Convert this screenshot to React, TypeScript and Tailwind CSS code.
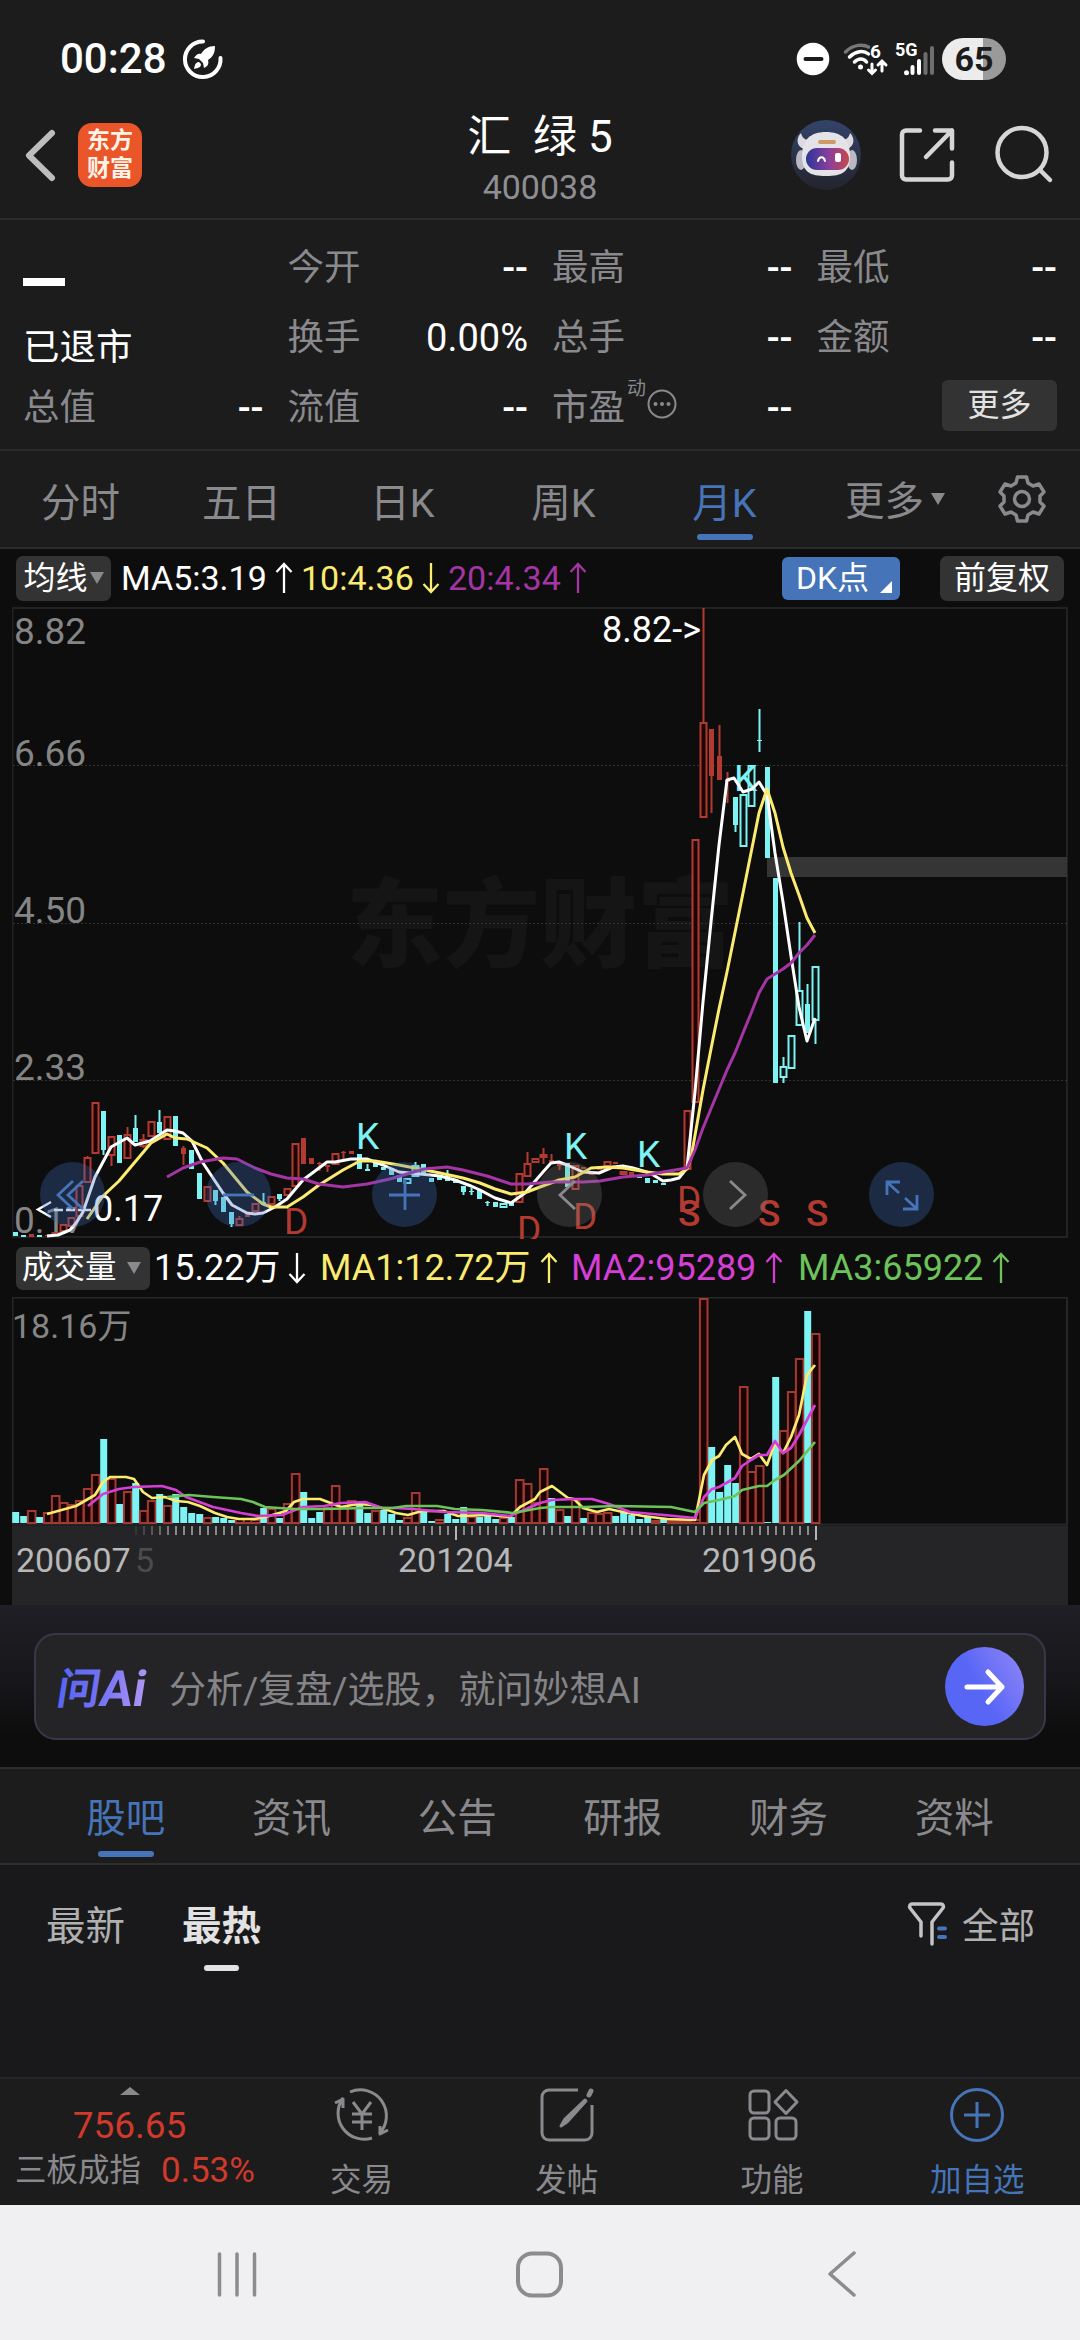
import type { ReactNode } from "react";
import clsx from "clsx";

type Candle = [kind: string, top: number, bottom: number, high?: number, low?: number];

const UP = "#b33a30";
const DOWN = "#7df3f3";

// Kinds: r / c = filled, R / C = hollow
const candles: Candle[] = [
  ["c", 1232, 1236], ["c", 1235, 1237], ["r", 1234, 1237], ["c", 1235, 1237], ["r", 1235, 1236],
  ["R", 1232, 1236], ["R", 1224, 1232], ["R", 1217, 1227], ["R", 1185, 1217], ["R", 1157, 1183, 1156],
  ["R", 1102, 1154], ["c", 1111, 1150, 1111, 1155], ["R", 1136, 1156, 1136, 1166], ["c", 1135, 1163], ["R", 1134, 1159, 1127],
  ["c", 1128, 1142, 1115], ["R", 1139, 1147, 1134, 1148], ["R", 1121, 1137], ["c", 1122, 1133, 1110], ["R", 1116, 1140],
  ["c", 1116, 1146], ["r", 1148, 1154, 1146, 1165], ["c", 1150, 1169], ["c", 1173, 1199], ["R", 1186, 1202],
  ["c", 1190, 1201, 1190, 1205], ["c", 1197, 1212], ["c", 1212, 1224, 1212, 1227], ["R", 1218, 1226, 1216], ["r", 1212, 1217],
  ["R", 1203, 1212], ["c", 1202, 1205, 1193], ["R", 1196, 1205], ["c", 1194, 1199, 1194, 1201], ["R", 1188, 1196],
  ["R", 1143, 1187], ["r", 1138, 1164], ["r", 1158, 1164], ["r", 1163, 1164, 1162, 1171], ["r", 1165, 1167, 1165, 1172],
  ["R", 1153, 1165], ["r", 1152, 1153, 1151, 1159], ["r", 1151, 1154], ["c", 1154, 1169], ["c", 1169, 1171, 1164],
  ["c", 1163, 1167], ["c", 1167, 1170], ["c", 1168, 1175], ["c", 1175, 1182], ["C", 1178, 1184],
  ["C", 1165, 1177, 1162], ["c", 1164, 1175], ["c", 1178, 1182], ["c", 1177, 1180], ["c", 1174, 1181, 1170],
  ["c", 1179, 1183], ["c", 1186, 1192, 1186, 1195], ["c", 1191, 1192, 1188, 1195], ["c", 1190, 1199], ["c", 1202, 1203, 1201, 1206],
  ["c", 1202, 1207], ["C", 1203, 1208], ["c", 1203, 1206], ["R", 1173, 1203], ["R", 1163, 1177, 1152],
  ["R", 1158, 1163], ["R", 1154, 1158, 1148, 1164], ["r", 1160, 1162, 1154], ["r", 1163, 1166, 1163, 1170], ["c", 1163, 1187],
  ["R", 1165, 1190], ["r", 1167, 1169], ["r", 1173, 1175], ["r", 1168, 1170], ["R", 1161, 1167],
  ["r", 1162, 1164], ["R", 1171, 1175], ["r", 1172, 1175], ["c", 1175, 1178], ["c", 1178, 1183],
  ["c", 1180, 1183], ["c", 1183, 1185], ["r", 1170, 1172], ["r", 1168, 1170], ["R", 1110, 1170],
  ["R", 839, 1103], ["R", 722, 818, 608], ["r", 729, 776, 729, 813], ["r", 756, 780, 725], ["r", 780, 782, 772, 803],
  ["c", 797, 825, 797, 832], ["C", 794, 847], ["C", 765, 807], ["c", 740, 741, 709, 752], ["c", 767, 858],
  ["c", 878, 1083], ["C", 1066, 1078, 1057, 1083], ["C", 1035, 1069], ["C", 990, 1026, 922], ["c", 1004, 1033, 984],
  ["C", 966, 1021, 966, 1044],
];

const volumes =
  "c1512 c1516 r1510 c1517 r1512 r1495 r1502 r1504 r1500 r1488 r1474 c1439 r1478 c1504 r1491 c1483 r1510 r1500 c1494 r1505 " +
  "c1494 c1507 c1513 c1514 r1517 c1517 c1518 c1520 r1518 r1518 r1519 c1508 r1508 c1518 r1503 r1473 c1492 c1518 c1512 r1507 " +
  "r1485 r1507 r1500 c1505 c1513 r1510 c1510 c1514 c1520 r1517 r1492 c1510 c1521 r1519 c1514 c1519 c1507 r1516 c1517 c1514 " +
  "c1519 r1517 c1517 r1479 r1483 r1502 r1468 c1498 r1509 c1516 r1499 c1518 r1512 r1513 r1512 c1516 c1512 c1515 c1519 c1517 " +
  "r1520 c1519 r1520 r1520 r1520 r1519 r1298 c1447 c1492 c1465 c1483 r1386 r1471 r1465 c1522 c1377 r1430 r1391 r1358 c1311 r1333";

const priceLines = [
  {
    color: "#ffffff",
    points:
      "47,1236 58,1235 70,1230 76,1223 83,1212 95,1177 111,1147 127,1138 135,1145 150,1141 167,1130 175,1131 183,1133 192,1141 203,1163 223,1193 232,1205 247,1213 255,1214 263,1213 275,1207 287,1199 303,1180 327,1162 335,1162 351,1159 367,1159 383,1165 399,1172 420,1174 440,1176 455,1180 471,1186 480,1190 495,1198 511,1203 525,1193 543,1172 551,1163 559,1162 567,1165 583,1172 599,1173 613,1167 623,1166 633,1168 650,1173 663,1181 671,1180 679,1178 687,1168 695,1092 703,1002 711,922 719,845 727,780 734,778 743,792 752,789 759,782 767,795 775,853 783,902 791,956 799,1007 807,1041 815,1018",
  },
  {
    color: "#fbeb70",
    points:
      "87,1219 103,1196 119,1181 135,1162 151,1143 167,1134 175,1138 187,1139 207,1148 223,1163 247,1192 263,1204 271,1207 287,1207 303,1197 319,1185 343,1170 360,1161 375,1161 399,1165 420,1169 440,1173 463,1178 480,1183 495,1189 511,1194 527,1192 540,1187 559,1180 575,1177 591,1168 607,1167 623,1168 647,1172 663,1174 679,1174 687,1169 691,1158 703,1090 711,1049 719,1009 727,972 743,893 759,813 767,789 775,813 783,847 791,873 799,895 807,918 815,933",
  },
  {
    color: "#a535a5",
    points:
      "167,1177 183,1168 200,1162 223,1158 237,1159 255,1168 271,1174 287,1178 303,1179 319,1184 343,1187 367,1184 390,1179 424,1169 447,1167 463,1170 487,1176 511,1184 527,1184 551,1182 583,1182 600,1181 623,1177 647,1175 663,1172 687,1168 695,1150 703,1128 727,1070 735,1053 743,1033 752,1011 759,993 767,979 775,974 783,969 791,963 799,953 807,945 815,935",
  },
];

const volumeLines = [
  {
    color: "#fbeb70",
    points:
      "47,1514 76,1506 95,1495 103,1482 110,1477 126,1477 134,1479 143,1492 152,1498 165,1497 176,1501 188,1502 200,1506 215,1513 227,1517 239,1519 255,1519 269,1516 286,1511 294,1502 303,1499 320,1499 341,1507 358,1504 372,1505 382,1508 396,1513 408,1515 422,1511 444,1511 458,1516 489,1515 510,1517 520,1507 535,1499 540,1492 552,1486 568,1498 574,1499 583,1508 597,1512 609,1509 623,1512 643,1516 667,1519 695,1520 704,1475 712,1460 719,1456 726,1445 735,1437 742,1454 751,1459 759,1454 767,1465 775,1443 783,1453 791,1437 799,1415 807,1375 815,1365",
  },
  {
    color: "#d63fd6",
    points:
      "88,1506 103,1494 119,1489 134,1487 162,1486 176,1490 186,1497 213,1507 241,1513 258,1516 282,1515 303,1507 324,1506 341,1503 365,1502 382,1508 396,1508 413,1509 444,1512 482,1513 510,1516 540,1503 552,1500 574,1499 592,1499 609,1504 630,1512 664,1515 695,1518 704,1497 712,1489 719,1487 728,1482 735,1478 742,1466 751,1460 759,1455 767,1455 775,1441 783,1453 791,1448 799,1435 815,1405",
  },
  {
    color: "#6cc35a",
    points:
      "167,1497 189,1495 213,1497 241,1499 253,1502 265,1507 293,1509 324,1509 365,1508 393,1508 406,1506 437,1506 455,1509 482,1510 513,1513 540,1508 552,1507 585,1507 616,1506 671,1507 695,1512 704,1503 719,1500 735,1496 742,1490 759,1486 767,1486 775,1480 784,1475 799,1461 815,1442",
  },
];

const markers = [
  { t: "K", x: 356, y: 1149 },
  { t: "K", x: 564, y: 1159 },
  { t: "K", x: 637, y: 1167 },
  { t: "K", x: 734, y: 791 },
  { t: "D", x: 284, y: 1234 },
  { t: "D", x: 517, y: 1242 },
  { t: "D", x: 573, y: 1229 },
  { t: "D", x: 677, y: 1212 },
  { t: "S", x: 678, y: 1226 },
  { t: "S", x: 758, y: 1226 },
  { t: "S", x: 806, y: 1226 },
];

function StatusBar() {
  return (
    <div className="flex h-[112px] items-start justify-between pl-[60px] pr-[74px] text-white">
      <div className="flex items-center gap-[15px] pt-[35px]">
        <span className="text-[42px] font-medium leading-[48px]">00:28</span>
        <svg width="42" height="42" viewBox="0 0 42 42" fill="none">
          <path d="M21 3.500A17.800 17.800 0 1 0 38.500 20" stroke="#fff" strokeWidth="4" strokeLinecap="round" />
          <path d="M33 8c-7 0-11 3-14 8-3-1-5 1-7 4l5 1 4 4 1 5c4-2 5-4 4-8 5-3 7-7 7-14zM17 24c-3 0-4 2-5 7 5-1 7-2 7-5z" fill="#fff" />
        </svg>
      </div>
      <div className="flex items-center pt-[38px]">
        <svg width="146" height="42" viewBox="796 38 146 42" fill="none">
          <circle cx="813" cy="59" r="16.300" fill="#fff" />
          <path d="M805.500 59h16" stroke="#1c1c1c" strokeWidth="4" strokeLinecap="round" />
          <g strokeWidth="3.500" strokeLinecap="round">
            <path d="M845.500 52c8-8 18-8 23-5" stroke="#777" />
            <path d="M849.500 57c6-6 14-7 19-3M854.500 62c4-4 9-4 12 0" stroke="#fff" />
            <path d="M872 64v9M868.500 70l3.500 3.500 3.500-3.500M882 71v-9M878 65l4-4 4 4" stroke="#fff" strokeWidth="3" />
          </g>
          <circle cx="860.500" cy="67" r="2.500" fill="#fff" />
          <text x="870" y="58" fontSize="19" fontWeight="700" fill="#fff">6</text>
          <text x="895" y="55.500" fontSize="18" fontWeight="700" fill="#fff">5G</text>
          <circle cx="906.500" cy="72.800" r="2.500" fill="#fff" />
          <g strokeWidth="4" strokeLinecap="round">
            <path d="M912.500 67v6M919 61v12" stroke="#fff" />
            <path d="M925.500 54v19M932 48v25" stroke="#6e6e6e" />
          </g>
        </svg>
        <div className="flex h-[42px] w-[64px] items-center justify-center rounded-full bg-[linear-gradient(90deg,#ececec_64%,#9a9a9a_64%)] text-[34px] font-bold leading-none text-[#1c1c1c]">
          65
        </div>
      </div>
    </div>
  );
}

function TitleBar() {
  return (
    <div className="flex h-[106px] justify-between px-[22px]">
      <div className="flex w-[300px] gap-[20px] pt-[11px]">
        <svg width="36" height="64" viewBox="0 0 36 64" fill="none" stroke="#bdbdbd" strokeWidth="6" strokeLinecap="round" strokeLinejoin="round">
          <path d="M30 10L7 32.500 30 55" />
        </svg>
        <div className="flex h-[64px] w-[64px] flex-col items-center justify-center rounded-[14px] bg-[#ea5529] text-[23px] font-bold leading-[28px] text-[#fff3e8]">
          <span>东方</span>
          <span>财富</span>
        </div>
      </div>
      <div className="flex flex-col items-center">
        <div className="whitespace-pre text-[44px] leading-[50px] text-white">汇  绿 5</div>
        <div className="mt-[5px] text-[34px] leading-[40px] text-[#8e8e93]">400038</div>
      </div>
      <div className="flex w-[300px] justify-end pt-[7px]">
        <svg width="270" height="72" viewBox="788 119 270 72" fill="none">
          <defs>
            <linearGradient id="avatar" x1="0" y1="0" x2="0" y2="1">
              <stop offset="0" stopColor="#33436a" />
              <stop offset="1" stopColor="#23242c" />
            </linearGradient>
            <linearGradient id="visor" x1="0" y1="0" x2="1" y2="0">
              <stop offset="0" stopColor="#2c3597" />
              <stop offset="0.550" stopColor="#8b3f9a" />
              <stop offset="1" stopColor="#c8484c" />
            </linearGradient>
          </defs>
          <circle cx="826" cy="155" r="35" fill="url(#avatar)" />
          <path d="M801 133c-5 5-5 13 3 16l7-9c-5 1-9-2-10-7zM850 133c5 5 5 13-3 16l-7-9c5 1 9-2 10-7z" fill="#dadae0" />
          <ellipse cx="801" cy="160" rx="5" ry="10" fill="#b9b9c4" />
          <ellipse cx="852" cy="160" rx="5" ry="10" fill="#b9b9c4" />
          <path d="M802 156c0-16 8-24 24-24s24 8 24 24-8 20-24 20-24-4-24-20z" fill="#e4e3e8" />
          <rect x="818" y="140" width="18" height="4" rx="2" fill="#cf9a66" />
          <rect x="806" y="148" width="43" height="22" rx="11" fill="url(#visor)" />
          <path d="M818 161c1-5 6-5 7 0" stroke="#fff" strokeWidth="2" strokeLinecap="round" />
          <rect x="835" y="153" width="6" height="9" rx="2" fill="#fff" />
          <g stroke="#d6d6d6" strokeWidth="4.500" strokeLinecap="round" strokeLinejoin="round">
            <path d="M920 130.500h-14a4 4 0 0 0-4 4v41a4 4 0 0 0 4 4h42a4 4 0 0 0 4-4v-13M935 130.500h17v18M952 130.500L926 157" />
            <circle cx="1022" cy="152.500" r="24.500" />
            <path d="M1040 170l10 10" />
          </g>
        </svg>
      </div>
    </div>
  );
}

function Quote({ label, value, extra }: { label: string; value: string; extra?: ReactNode }) {
  return (
    <div className="flex h-[70px] items-center justify-between pt-[6px]">
      <span className="flex text-[#8a8a8e]">
        {label}
        {extra}
      </span>
      <span className={clsx("text-[38px] text-white", value === "--" && "font-medium")}>{value}</span>
    </div>
  );
}

function QuotePanel() {
  return (
    <div className="h-[233px] border-y-2 border-[#2c2c2c] px-[23px] pt-[10px] text-[36.5px] leading-[44px]">
      <div className="grid grid-cols-4 grid-rows-3 gap-x-[24px]">
        <div className="row-span-2 flex flex-col text-white">
          <svg className="mt-[48px]" width="42" height="8">
            <rect width="42" height="8" fill="#fff" />
          </svg>
          <span className="mt-[40px]">已退市</span>
        </div>
        <Quote label="今开" value="--" />
        <Quote label="最高" value="--" />
        <Quote label="最低" value="--" />
        <Quote label="换手" value="0.00%" />
        <Quote label="总手" value="--" />
        <Quote label="金额" value="--" />
        <Quote label="总值" value="--" />
        <Quote label="流值" value="--" />
        <Quote
          label="市盈"
          value="--"
          extra={
            <>
              <span className="ml-[2px] -mt-[11px] text-[19px] leading-[28px]">动</span>
              <svg className="ml-[1px] mt-[3px]" width="30" height="30" viewBox="0 0 30 30" fill="#8a8a8e">
                <circle cx="15" cy="15" r="13.500" fill="none" stroke="#8a8a8e" strokeWidth="2" />
                <circle cx="8.500" cy="15" r="2" />
                <circle cx="15" cy="15" r="2" />
                <circle cx="21.500" cy="15" r="2" />
              </svg>
            </>
          }
        />
        <div className="flex h-[70px] items-center justify-end">
          <div className="flex h-[51px] w-[115px] items-center justify-center rounded-[6px] bg-[#333333] text-[32px] text-[#e2e2e2]">更多</div>
        </div>
      </div>
    </div>
  );
}

function PeriodTabs() {
  const tabs = ["分时", "五日", "日K", "周K", "月K"];
  return (
    <div className="flex h-[96px] items-center text-[39.5px] text-[#8a8a8e]">
      {tabs.map((tab) => (
        <div key={tab} className={clsx("flex h-full w-[161px] flex-col items-center pt-[28px]", tab === "月K" && "text-[#4674b9]")}>
          <span className="leading-[50px]">{tab}</span>
          {tab === "月K" && <span className="mt-[5px] h-[6px] w-[56px] rounded-[3px] bg-[#4674b9]" />}
        </div>
      ))}
      <div className="ml-[40px] flex items-center">
        <span className="pt-[5px]">更多</span>
        <svg className="ml-[7px]" width="14" height="12">
          <path d="M0 0h14l-7 12z" fill="#8a8a8e" />
        </svg>
      </div>
      <svg className="ml-[52px]" width="50" height="50" viewBox="0 0 50 50" fill="none" stroke="#8a8a8e" strokeWidth="3.500" strokeLinejoin="round">
        <path d="M20.500 3h9l1.500 6 5 3 6-2 5 8-4 4v6l4 4-5 8-6-2-5 3-1.500 6h-9l-1.500-6-5-3-6 2-5-8 4-4v-6l-4-4 5-8 6 2 5-3z" />
        <circle cx="25" cy="25" r="7.500" />
      </svg>
    </div>
  );
}

function Arrow({ color, down }: { color: string; down?: boolean }) {
  return (
    <svg width="18" height="32" viewBox="0 0 18 32" fill="none" stroke={color} strokeWidth="2.300">
      <path d={down ? "M9 1v29M1.500 22L9 30l7.500-8" : "M9 31V2M1.500 10L9 2l7.500 8"} />
    </svg>
  );
}

function AverageBar() {
  return (
    <div className="flex h-[58px] items-center pl-[16px] pr-[16px] text-[34px] text-white">
      <div className="flex h-[45px] w-[95px] items-center justify-center gap-[2px] rounded-[7px] bg-[#333333] text-[32px]">
        <span>均线</span>
        <svg width="14" height="12">
          <path d="M0 0h14l-7 12z" fill="#8a8a8e" />
        </svg>
      </div>
      <div className="ml-[10px] flex w-[180px] items-center gap-[8px]">
        MA5:3.19
        <Arrow color="#fff" />
      </div>
      <div className="flex w-[147px] items-center gap-[8px] text-[#fbeb70]">
        10:4.36
        <Arrow color="#fbeb70" down />
      </div>
      <div className="flex items-center gap-[8px] text-[#a535a5]">
        20:4.34
        <Arrow color="#a535a5" />
      </div>
      <div className="ml-auto flex h-[43px] w-[118px] items-center rounded-[6px] bg-[#4674b9] pl-[14px] text-[32px]">
        DK点
        <svg className="ml-[11px] mt-[18px]" width="12" height="12">
          <path d="M12 0v12H0z" fill="#fff" />
        </svg>
      </div>
      <div className="ml-[40px] flex h-[45px] w-[124px] items-center justify-center rounded-[7px] bg-[#333333] text-[32px]">前复权</div>
    </div>
  );
}

function CandleShape({ candle, x }: { candle: Candle; x: number }) {
  const [kind, top, bottom, high = top, low = bottom] = candle;
  const color = kind.toLowerCase() === "r" ? UP : DOWN;
  const hollow = kind === "R" || kind === "C";
  return (
    <g>
      {high < top && <rect x={x - 1} y={high} width="2" height={top - high} fill={color} />}
      {low > bottom && <rect x={x - 1} y={bottom} width="2" height={low - bottom} fill={color} />}
      {hollow ? (
        <rect x={x - 3} y={top + 1} width="6" height={Math.max(bottom - top - 2, 1)} fill={kind === "R" ? "#1c0505" : "#061414"} stroke={color} strokeWidth="2" />
      ) : (
        <rect x={x - 2.5} y={top} width="5" height={Math.max(bottom - top, 1)} fill={color} />
      )}
    </g>
  );
}

function PriceChart() {
  return (
    <svg className="block" width="1057" height="632" viewBox="12 607 1057 632" fill="none">
      <rect x="12.500" y="608" width="1054.500" height="629" stroke="#222224" strokeWidth="2" />
      <text x="346" y="959" fontSize="97" fontWeight="900" fill="#151515">东方财富</text>
      {[765, 923, 1080].map((y) => (
        <path key={y} d={`M13 ${y + 0.5}H1067`} stroke="#333" strokeDasharray="2 2" />
      ))}
      <rect x="767" y="857" width="300" height="20" fill="#353535" />
      <g fontSize="37" fill="#858585">
        <text x="14" y="644">8.82</text>
        <text x="14" y="766">6.66</text>
        <text x="14" y="923">4.50</text>
        <text x="14" y="1080">2.33</text>
        <text x="14" y="1233">0.17</text>
      </g>
      {candles.map((candle, i) => (
        <CandleShape key={i} candle={candle} x={15.5 + i * 8} />
      ))}
      {markers.map((m) => (
        <text key={`${m.t}${m.x}`} x={m.x} y={m.y} fontSize="37" fontWeight={m.t === "S" ? 500 : 400} fill={m.t === "K" ? DOWN : UP}>
          {m.t}
        </text>
      ))}
      {priceLines.map((line) => (
        <polyline key={line.color} points={line.points} stroke={line.color} strokeWidth="3" strokeLinejoin="round" />
      ))}
      <text x="602" y="642" fontSize="36" fill="#fff">8.82-&gt;</text>
      <path d="M51 1202l-13 7.500 13 7.500M54 1210h9M66 1210h9M78 1210h13" stroke="#fff" strokeWidth="2.500" />
      <text x="93" y="1221" fontSize="36" fill="#fff">0.17</text>
    </svg>
  );
}

const controls = [
  { id: "rewind", blue: true, d: "M33 19L18 33l15 14M43 19L28 33l15 14" },
  { id: "minus", blue: true, d: "M17 33h31" },
  { id: "plus", blue: true, d: "M17 33h31M33 17v31" },
  { id: "prev", blue: false, d: "M38 19L23 33l15 14" },
  { id: "next", blue: false, d: "M27 19l15 14-15 14" },
  { id: "expand", blue: true, d: "M30 31L19 21M18 33V20h13M36 36l11 10M48 33v14H34" },
];

function ChartControls() {
  return (
    <div className="absolute left-[40px] top-[555px] flex gap-[100.800px]">
      {controls.map((c) => (
        <div key={c.id} className={clsx("h-[65px] w-[65px] rounded-full", c.blue ? "bg-[#3f6fc0]/30" : "bg-[#888888]/25")}>
          <svg width="65" height="65" viewBox="0 0 65 65" fill="none" stroke={c.blue ? "#4674b9" : "#8a8a8e"} strokeWidth="2.800">
            <path d={c.d} />
          </svg>
        </div>
      ))}
    </div>
  );
}

function VolumeBar() {
  return (
    <div className="flex h-[58px] items-center pl-[16px] text-[36px] text-white">
      <div className="flex h-[43px] w-[134px] items-center justify-between rounded-[7px] bg-[#333333] pl-[6px] pr-[9px] text-[31.5px]">
        <span>成交量</span>
        <svg width="14" height="12">
          <path d="M0 0h14l-7 12z" fill="#8a8a8e" />
        </svg>
      </div>
      <div className="ml-[4px] flex w-[166px] items-center gap-[8px]">
        15.22万
        <Arrow color="#fff" down />
      </div>
      <div className="flex w-[251px] items-center gap-[9px] text-[#fbeb70]">
        MA1:12.72万
        <Arrow color="#fbeb70" />
      </div>
      <div className="flex w-[227px] items-center gap-[9px] text-[#d63fd6]">
        MA2:95289
        <Arrow color="#d63fd6" />
      </div>
      <div className="flex items-center gap-[9px] text-[#6cc35a]">
        MA3:65922
        <Arrow color="#6cc35a" />
      </div>
    </div>
  );
}

function VolumeChart() {
  const ticks = Array.from({ length: 86 }, (_, i) => i + 15);
  return (
    <svg className="block" width="1057" height="308" viewBox="12 1297 1057 308" fill="none">
      <rect x="12.500" y="1297.500" width="1054.500" height="227" stroke="#262628" strokeWidth="2" />
      <text x="12" y="1338" fontSize="34" fill="#858585">18.16万</text>
      {volumes.split(" ").map((bar, i) => {
        const x = 15.7 + i * 8;
        const top = Number(bar.slice(1));
        return bar[0] === "c" ? (
          <rect key={i} x={x - 3.5} y={top} width="7" height={1523 - top} fill={DOWN} />
        ) : (
          <rect key={i} x={x - 3.8} y={top + 1} width="7.600" height={Math.max(1522 - top, 1)} fill="#1c0404" stroke="#a33a32" strokeWidth="2" />
        );
      })}
      {volumeLines.map((line) => (
        <polyline key={line.color} points={line.points} stroke={line.color} strokeWidth="2.700" strokeLinejoin="round" />
      ))}
      <rect x="12" y="1525.500" width="1056" height="80" fill="#252527" />
      {ticks.map((i) => {
        const long = i === 55 || i === 100;
        return (
          <rect key={i} x={15 + i * 8} y="1526" width="2" height={long ? 14 : 9} fill={long ? "#b5b5b5" : "#8a8a8a"} opacity={Math.min(1, (i - 14) / 6)} />
        );
      })}
      <g fontSize="34" fill="#b8b8b8">
        <text x="16" y="1572">200607</text>
        <text x="135" y="1572" fill="#4b4b4d">5</text>
        <text x="398" y="1572">201204</text>
        <text x="702" y="1572">201906</text>
      </g>
    </svg>
  );
}

function AskAi() {
  return (
    <div className="h-[162px] bg-[linear-gradient(180deg,#1f1f25_0%,#17171b_45%,#0d0d0d_80%)] px-[34px] pt-[28px]">
      <div className="flex h-[107px] items-center rounded-[22px] border-2 border-[#38384a] bg-[#242426] pl-[18px] pr-[20px]">
        <svg width="94" height="46" viewBox="54 1663 94 46" fill="none">
          <defs>
            <linearGradient id="ask" x1="0" y1="0" x2="90" y2="0" gradientUnits="userSpaceOnUse">
              <stop offset="0" stopColor="#5566f2" />
              <stop offset="0.500" stopColor="#7472f5" />
              <stop offset="1" stopColor="#b098f5" />
            </linearGradient>
          </defs>
          <g transform="translate(55 1704) skewX(-9)" fill="url(#ask)">
            <text x="0" y="-1" fontSize="43" fontWeight="700">问</text>
            <text x="43" y="1" fontSize="50" fontWeight="700" textLength="46" lengthAdjust="spacingAndGlyphs">Ai</text>
          </g>
        </svg>
        <span className="ml-[21px] pt-[8px] text-[37px] leading-[44px] text-[#858588]">分析/复盘/选股，就问妙想AI</span>
        <div className="ml-auto flex h-[79px] w-[79px] items-center justify-center rounded-full bg-[linear-gradient(60deg,#5866f6_45%,#9388f6)]">
          <svg width="42" height="38" viewBox="0 0 42 38" fill="none" stroke="#fff" strokeWidth="5" strokeLinecap="round" strokeLinejoin="round">
            <path d="M3 19h35M24 4l14 15-14 15" />
          </svg>
        </div>
      </div>
    </div>
  );
}

function NewsTabs() {
  const tabs = ["股吧", "资讯", "公告", "研报", "财务", "资料"];
  return (
    <div className="grid h-[98px] grid-cols-6 border-y-2 border-[#2e2e2e] bg-[#1c1c1c] px-[43px] text-[39.5px] leading-[50px] text-[#8a8a8e]">
      {tabs.map((tab, i) => (
        <div key={tab} className={clsx("flex flex-col items-center pt-[25px]", i === 0 && "text-[#4674b9]")}>
          <span>{tab}</span>
          {i === 0 && <span className="mt-[7px] h-[6px] w-[56px] rounded-[3px] bg-[#4674b9]" />}
        </div>
      ))}
    </div>
  );
}

function PostFilter() {
  return (
    <div className="flex h-[212px] items-start bg-[#19191b] pl-[46px] pr-[45px] pt-[37px] text-[39.5px] leading-[50px] text-[#b0b0b0]">
      <span>最新</span>
      <div className="ml-[57px] flex flex-col items-center font-bold text-[#e2e2e2]">
        <span>最热</span>
        <span className="mt-[13px] h-[6px] w-[35px] rounded-[3px] bg-[#e2e2e2]" />
      </div>
      <div className="ml-auto flex items-center gap-[13px] text-[36.5px]">
        <svg className="-mt-[6px]" width="42" height="44" viewBox="0 0 42 44" fill="none" strokeLinecap="round" strokeLinejoin="round">
          <path d="M14 34V20L3 6c-1-2 0-4 2-4h29c2 0 3 2 2 4L25 20v22" stroke="#c4c4c4" strokeWidth="3.500" />
          <path d="M32 26.500h6M32 35h6" stroke="#4674b9" strokeWidth="4" />
        </svg>
        <span>全部</span>
      </div>
    </div>
  );
}

function BottomBar() {
  return (
    <div className="flex h-[128px] border-t-2 border-[#262626] bg-[#1c1c1c] text-[31.5px] text-[#8a8a8e]">
      <div className="flex w-[259px] flex-col items-center pt-[8px]">
        <svg width="20" height="8">
          <path d="M0 8L10 0l10 8z" fill="#8a8a8e" />
        </svg>
        <span className="mt-[10px] text-[37px] leading-[42px] text-[#d0392b]">756.65</span>
        <div className="flex w-full items-center pl-[15px] pt-[4px] leading-[40px]">
          三板成指
          <span className="ml-[20px] text-[35px] text-[#d0392b]">0.53%</span>
        </div>
      </div>
      <NavItem label="交易">
        <path d="M19 7a26 26 0 0 1 29 42M41 53A26 26 0 0 1 12 13M4 18l8-4v9M49 41v8l8-4" />
        <path d="M22 17l9 12 9-12M31 29v16M21 29h20M21 37h20" />
      </NavItem>
      <NavItem label="发帖">
        <path d="M42 5H13a7 7 0 0 0-7 7v36a7 7 0 0 0 7 7h36a7 7 0 0 0 7-7V20" />
        <path d="M49 15L29 34l-4 7 6-4 19-21z" fill="currentColor" />
        <path d="M53 10l2-4" strokeWidth="5" strokeLinecap="round" />
      </NavItem>
      <NavItem label="功能">
        <rect x="9" y="6" width="19" height="22" rx="4" />
        <path d="M45 5.500L56 17 45 28.500 34 17z" />
        <rect x="9" y="33" width="19" height="21" rx="4" />
        <rect x="35" y="33" width="20" height="21" rx="4" />
      </NavItem>
      <NavItem label="加自选" active>
        <circle cx="31" cy="30" r="25.500" />
        <path d="M31 17v26M18 30h26" />
      </NavItem>
    </div>
  );
}

function NavItem({ label, active, children }: { label: string; active?: boolean; children: ReactNode }) {
  return (
    <div className={clsx("flex flex-1 flex-col items-center pt-[6px]", active && "text-[#4674b9]")}>
      <svg width="62" height="60" viewBox="0 0 62 60" fill="none" stroke="currentColor" strokeWidth="3" strokeLinejoin="round">
        {children}
      </svg>
      <span className="mt-[14px] leading-[44px]">{label}</span>
    </div>
  );
}

function SystemNav() {
  return (
    <div className="h-[135px] bg-[#f0f0f3]">
      <svg className="block" width="1080" height="135" fill="none" stroke="#8c8c8c" strokeWidth="3.500" strokeLinecap="round" strokeLinejoin="round">
        <path d="M219.500 49v41M237 49v41M254.500 49v41" />
        <rect x="518" y="48.500" width="43" height="42" rx="14" strokeWidth="4" />
        <path d="M854 48l-24 21 24 21" />
      </svg>
    </div>
  );
}

export default function App() {
  return (
    <div className="h-[2340px] w-[1080px] overflow-hidden bg-[#1c1c1c] font-[Roboto,'Noto_Sans_CJK_SC',sans-serif]">
      <StatusBar />
      <TitleBar />
      <QuotePanel />
      <PeriodTabs />
      <div className="border-t-2 border-[#2c2c2c] bg-[#0d0d0d]">
        <AverageBar />
        <div className="relative pl-[12px]">
          <PriceChart />
          <ChartControls />
        </div>
        <VolumeBar />
        <div className="pl-[12px]">
          <VolumeChart />
        </div>
      </div>
      <AskAi />
      <NewsTabs />
      <PostFilter />
      <BottomBar />
      <SystemNav />
    </div>
  );
}
